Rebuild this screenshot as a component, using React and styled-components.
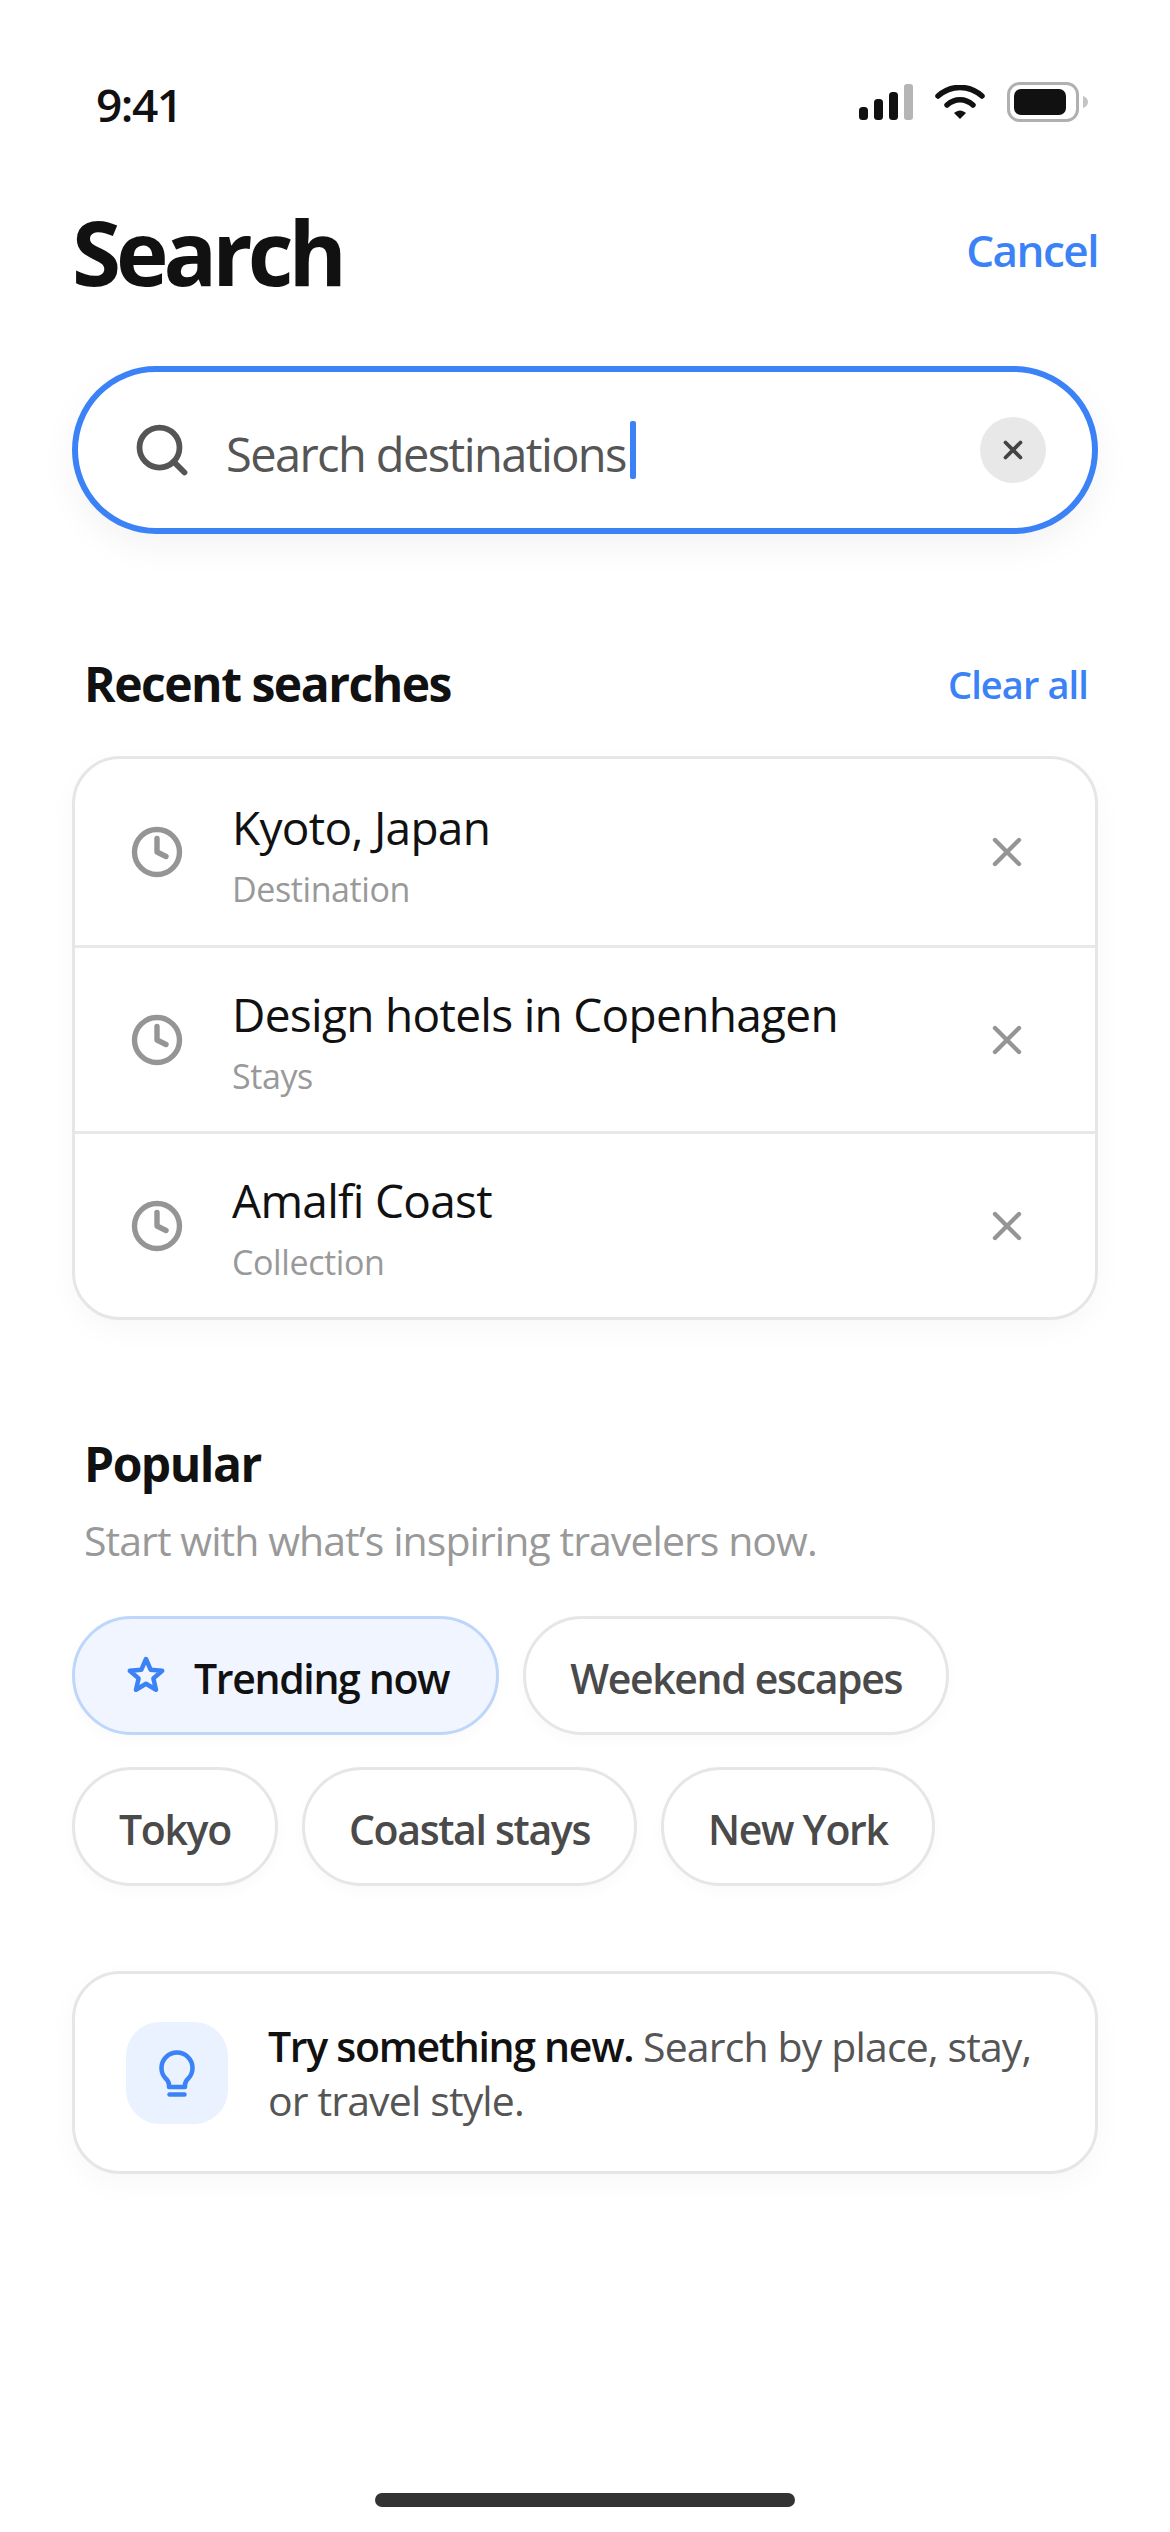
import React from "react";
import styled, { createGlobalStyle } from "styled-components";
import { Search, X, Clock } from "lucide-react";

const Global = createGlobalStyle`
  html, body { margin: 0; padding: 0; background: #fff; }
  * { box-sizing: border-box; }
  body { font-family: "Open Sans", "Noto Sans", "Liberation Sans", sans-serif; color: #111; }
`;

const Screen = styled.div`
  width: 1170px;
  height: 2532px;
  display: flex;
  flex-direction: column;
  padding: 0 72px;
  background: #fff;
`;

const StatusBar = styled.div`
  height: 197px;
  padding: 74px 9px 0 24px;
  display: flex;
  justify-content: space-between;
  align-items: flex-start;
`;

const Time = styled.span`
  font-size: 46px;
  line-height: 60px;
  font-weight: 600;
  letter-spacing: -1.5px;
`;

const StatusIcons = styled.div`
  display: flex;
  align-items: center;
  gap: 22px;
  margin-top: 8px;
`;

const Header = styled.div`
  display: flex;
  justify-content: space-between;
  align-items: center;
  height: 110px;
`;

const Title = styled.h1`
  margin: 0;
  font-size: 89px;
  line-height: 110px;
  font-weight: 700;
  letter-spacing: -5px;
`;

const Cancel = styled.a`
  font-size: 44px;
  font-weight: 600;
  letter-spacing: -1.5px;
  color: #3b82f6;
  margin-bottom: 4px;
`;

const SearchBox = styled.div`
  margin-top: 59px;
  height: 168px;
  border: 6px solid #3b82f6;
  border-radius: 84px;
  display: flex;
  align-items: center;
  padding: 0 46px 0 54px;
  background: #fff;
  box-shadow: 0 12px 36px rgba(0, 0, 0, 0.05);
`;

const Query = styled.div`
  flex: 1;
  margin-left: 34px;
  padding-top: 8px;
  display: flex;
  align-items: center;
  font-size: 47px;
  color: #555;
  letter-spacing: -1.6px;
`;

const Caret = styled.span`
  width: 6px;
  height: 58px;
  margin: -8px 0 0 4px;
  background: #3b82f6;
  border-radius: 2px;
`;

const ClearButton = styled.span`
  width: 66px;
  height: 66px;
  border-radius: 50%;
  background: #e8e8e8;
  color: #444;
  display: flex;
  align-items: center;
  justify-content: center;
`;

const SectionHead = styled.div`
  display: flex;
  justify-content: space-between;
  align-items: center;
  padding: 0 10px 0 12px;
  margin-top: ${(p) => p.$top}px;
  height: 70px;
`;

const SectionTitle = styled.h2`
  margin: 0;
  font-size: 48px;
  font-weight: 700;
  letter-spacing: -1.5px;
`;

const ClearAll = styled.a`
  font-size: 38px;
  font-weight: 600;
  letter-spacing: -0.9px;
  color: #3b82f6;
  padding-top: 2px;
`;

const Card = styled.div`
  border: 3px solid #e6e6e6;
  border-radius: 48px;
  background: #fff;
  box-shadow: 0 10px 30px rgba(0, 0, 0, 0.03);
`;

const RecentCard = styled(Card)`
  margin-top: 38px;
`;

const Row = styled.div`
  height: 186px;
  display: flex;
  align-items: center;
  padding: 0 64px 0 55px;
  color: #959595;
  & + & {
    border-top: 3px solid #e8e8e8;
  }
`;

const RowText = styled.div`
  flex: 1;
  margin-left: 48px;
  margin-top: 4px;
`;

const RowTitle = styled.div`
  font-size: 46px;
  line-height: 60px;
  color: #111;
  letter-spacing: -0.7px;
`;

const RowSub = styled.div`
  font-size: 34px;
  line-height: 46px;
  margin-top: 9px;
  color: #999;
  letter-spacing: -0.4px;
`;

const Hint = styled.p`
  margin: 13px 0 0;
  padding: 0 12px;
  font-size: 41px;
  line-height: 58px;
  color: #999;
  letter-spacing: -0.93px;
`;

const Chips = styled.div`
  margin-top: 47px;
  display: flex;
  flex-wrap: wrap;
  gap: 32px 24px;
  width: 900px;
`;

const Chip = styled.span`
  height: 119px;
  padding: 4px ${(p) => (p.$active ? 47 : 44)}px 0 ${(p) => (p.$active ? 51 : 44)}px;
  border-radius: 60px;
  border: 3px solid ${(p) => (p.$active ? "#bfd6fb" : "#e6e6e6")};
  background: ${(p) => (p.$active ? "#f0f5ff" : "#fff")};
  color: ${(p) => (p.$active ? "#111" : "#4a4a4a")};
  display: inline-flex;
  align-items: center;
  gap: 28px;
  font-size: 41px;
  font-weight: 600;
  letter-spacing: -1.35px;
  box-shadow: 0 6px 16px rgba(0, 0, 0, 0.025);
`;

const ChipStar = styled.svg`
  margin-top: -6px;
`;

const TipCard = styled(Card)`
  margin-top: 85px;
  height: 203px;
  display: flex;
  align-items: center;
  padding: 0 40px 0 51px;
`;

const TipIcon = styled.div`
  width: 102px;
  height: 102px;
  padding-top: 3px;
  border-radius: 34px;
  background: #eaf1ff;
  color: #3b82f6;
  flex: none;
  display: flex;
  align-items: center;
  justify-content: center;
`;

const TipText = styled.p`
  margin: 0 0 0 40px;
  font-size: 41px;
  line-height: 54px;
  color: #555;
  letter-spacing: -0.85px;
  strong {
    color: #111;
    font-weight: 600;
    letter-spacing: -1.3px;
  }
`;

const HomeBar = styled.div`
  width: 420px;
  height: 14px;
  border-radius: 7px;
  background: #333;
  margin: auto auto 25px;
`;

const SignalIcon = () => (
  <svg width="54" height="36" viewBox="0 0 54 36">
    <rect x="0" y="23" width="9" height="13" rx="3.5" fill="#111" />
    <rect x="15" y="15" width="9" height="21" rx="3.5" fill="#111" />
    <rect x="30" y="8" width="9" height="28" rx="3.5" fill="#111" />
    <rect x="45" y="0" width="9" height="36" rx="3" fill="#b5b5b5" />
  </svg>
);

const WifiIcon = () => (
  <svg width="50" height="34" viewBox="0 0 50 34" fill="none">
    <path d="M3 11C16 -0.5 34 -0.5 47 11" stroke="#111" strokeWidth="5.5" strokeLinecap="round" />
    <path d="M12 20C20 13 30 13 38 20" stroke="#111" strokeWidth="5.5" strokeLinecap="round" />
    <path d="M19 28C23 24.500 27 24.500 31 28L25 34Z" fill="#111" />
  </svg>
);

const BatteryIcon = () => (
  <svg width="82" height="40" viewBox="0 0 82 40" fill="none">
    <rect x="1.500" y="1.500" width="69" height="37" rx="11" stroke="#b0b0b0" strokeWidth="3" />
    <rect x="7" y="7" width="52" height="26" rx="7" fill="#111" />
    <path d="M76 14C79 15 81 17 81 20C81 23 79 25 76 26Z" fill="#c4c4c4" />
  </svg>
);

const StarIcon = () => (
  <ChipStar width="40" height="40" viewBox="0 0 40 40" fill="none">
    <path
      d="M20 4L24.600 14.700L36.200 15.750L27.400 23.400L30 34.750L20 28.800L10 34.750L12.600 23.400L3.800 15.750L15.400 14.700Z"
      stroke="#3b82f6"
      strokeWidth="4.500"
      strokeLinejoin="round"
    />
  </ChipStar>
);

const BulbIcon = () => (
  <svg width="40" height="50" viewBox="0 0 40 50" fill="none">
    <path
      d="M12 38V36C12 33 10.500 31 8.500 29.300A15.500 15.500 0 1 1 31.500 29.300C29.500 31 28 33 28 36V38Z"
      stroke="currentColor"
      strokeWidth="4.500"
      strokeLinejoin="round"
    />
    <path d="M12.500 45.500H27.500" stroke="currentColor" strokeWidth="4.500" strokeLinecap="round" />
  </svg>
);

const recents = [
  { title: "Kyoto, Japan", sub: "Destination" },
  { title: "Design hotels in Copenhagen", sub: "Stays" },
  { title: "Amalfi Coast", sub: "Collection" },
];

export default function App() {
  return (
    <>
      <Global />
      <Screen>
        <StatusBar>
          <Time>9:41</Time>
          <StatusIcons>
            <SignalIcon />
            <WifiIcon />
            <BatteryIcon />
          </StatusIcons>
        </StatusBar>

        <Header>
          <Title>Search</Title>
          <Cancel>Cancel</Cancel>
        </Header>

        <SearchBox>
          <Search size={60} color="#555" strokeWidth={2.300} />
          <Query>
            Search destinations
            <Caret />
          </Query>
          <ClearButton>
            <X size={30} strokeWidth={3} />
          </ClearButton>
        </SearchBox>

        <SectionHead $top={114}>
          <SectionTitle>Recent searches</SectionTitle>
          <ClearAll>Clear all</ClearAll>
        </SectionHead>

        <RecentCard>
          {recents.map((r) => (
            <Row key={r.title}>
              <Clock size={54} strokeWidth={2.400} />
              <RowText>
                <RowTitle>{r.title}</RowTitle>
                <RowSub>{r.sub}</RowSub>
              </RowText>
              <X size={48} strokeWidth={2.200} />
            </Row>
          ))}
        </RecentCard>

        <SectionHead $top={108}>
          <SectionTitle>Popular</SectionTitle>
        </SectionHead>
        <Hint>Start with what’s inspiring travelers now.</Hint>

        <Chips>
          <Chip $active>
            <StarIcon />
            Trending now
          </Chip>
          <Chip>Weekend escapes</Chip>
          <Chip>Tokyo</Chip>
          <Chip>Coastal stays</Chip>
          <Chip>New York</Chip>
        </Chips>

        <TipCard>
          <TipIcon>
            <BulbIcon />
          </TipIcon>
          <TipText>
            <strong>Try something new.</strong> Search by place, stay, or travel style.
          </TipText>
        </TipCard>

        <HomeBar />
      </Screen>
    </>
  );
}
